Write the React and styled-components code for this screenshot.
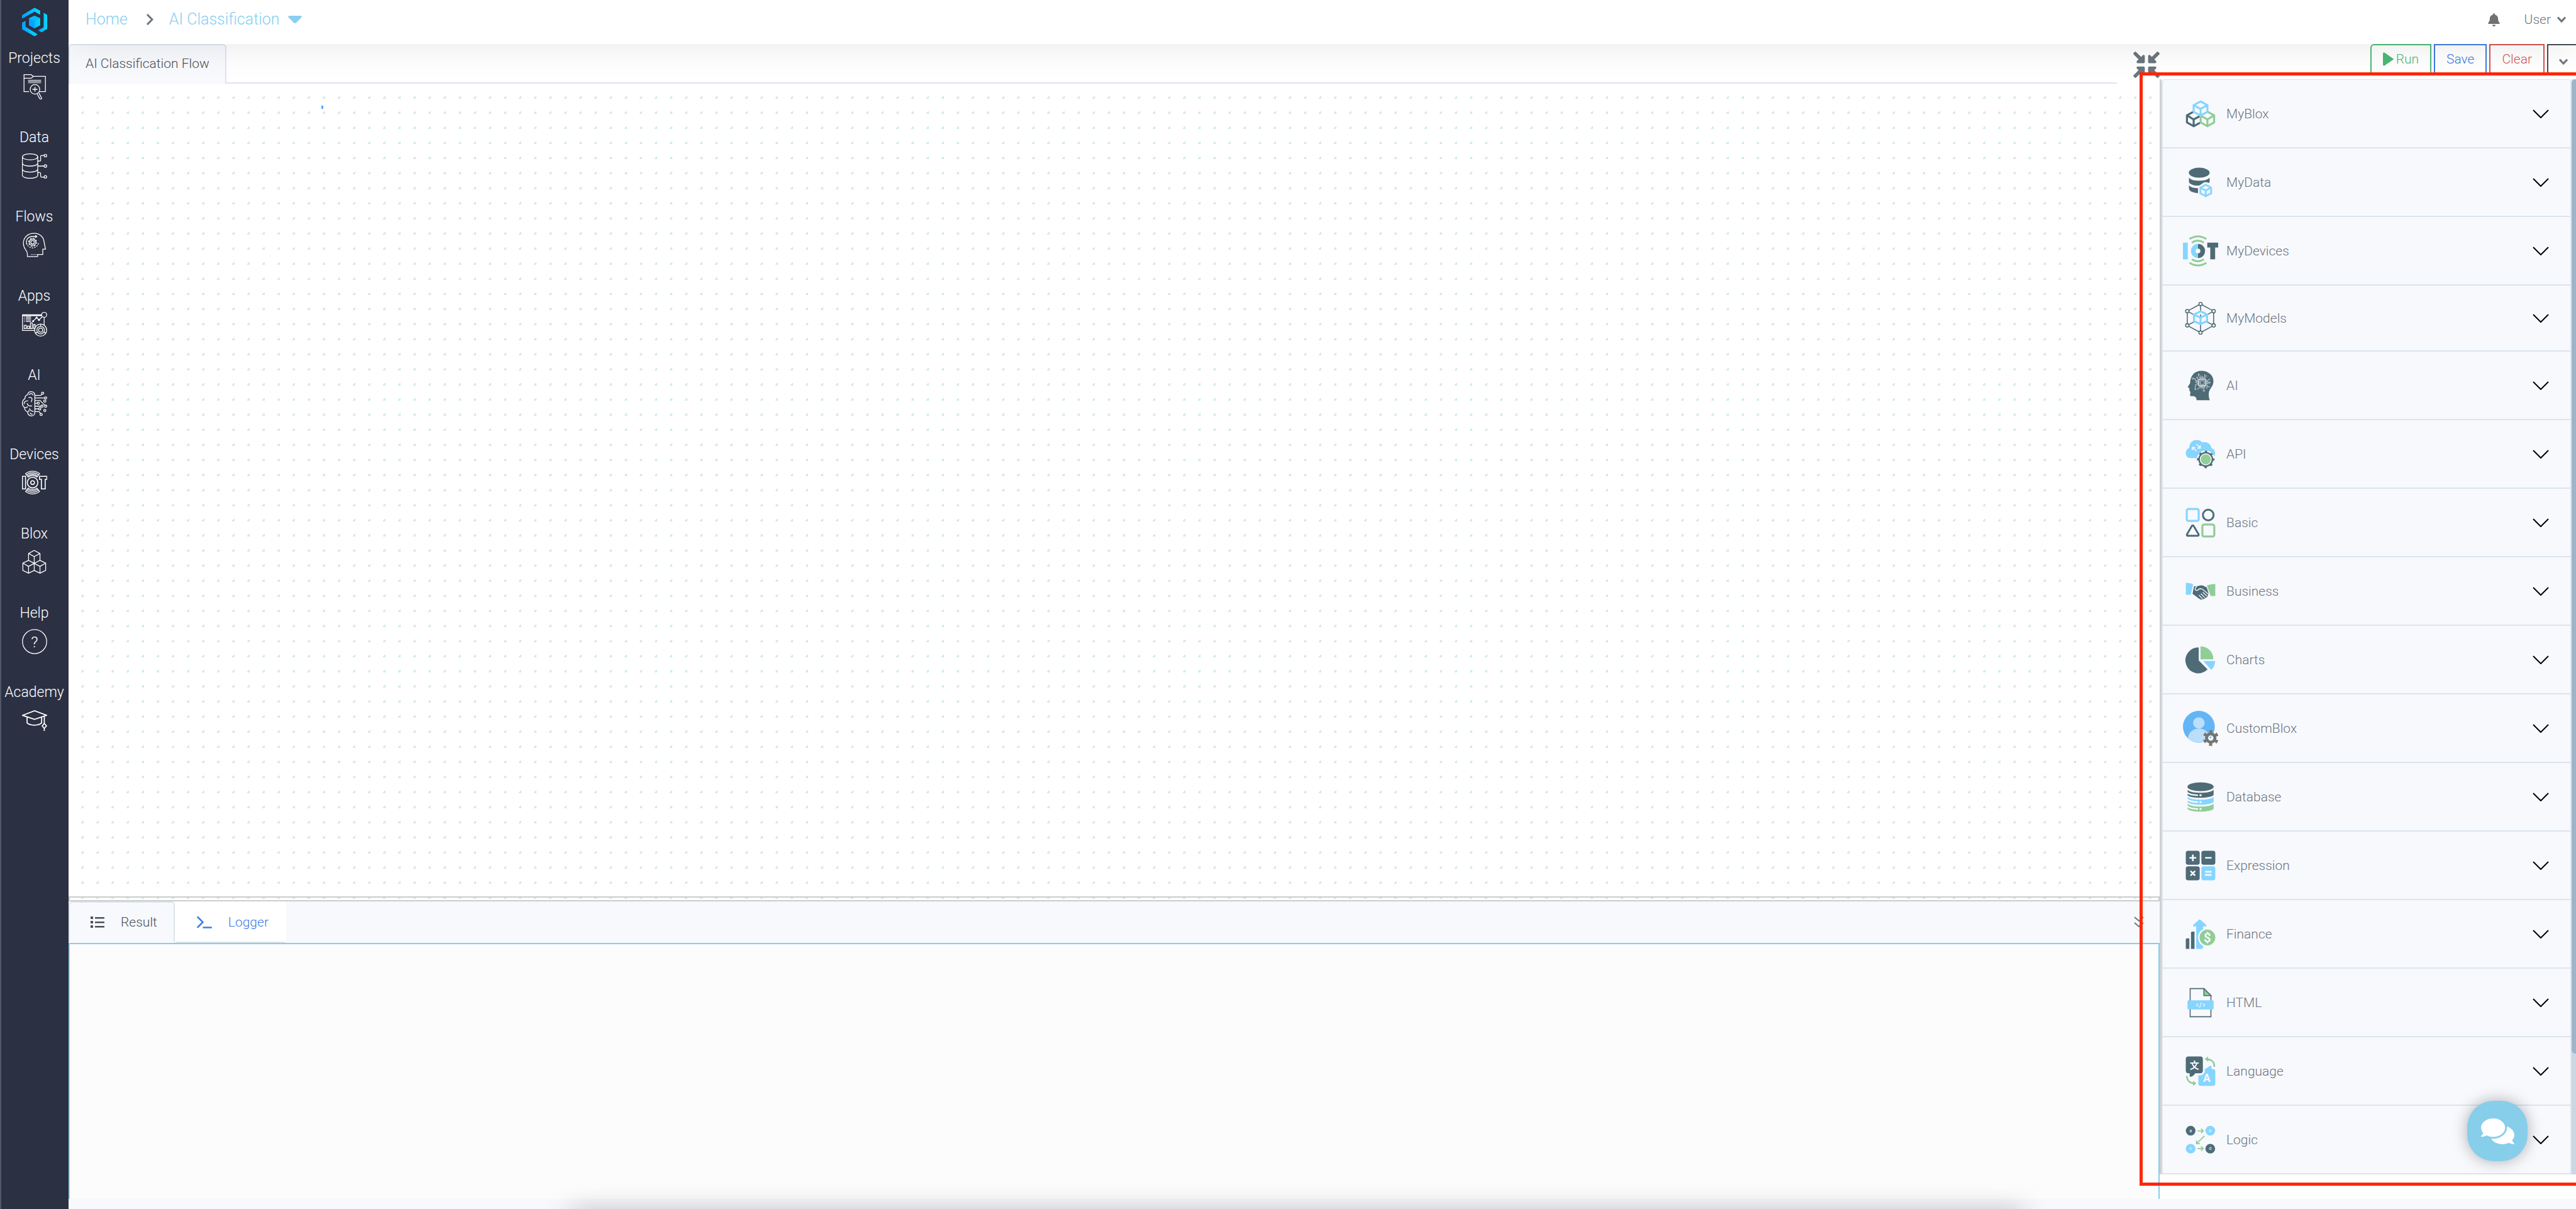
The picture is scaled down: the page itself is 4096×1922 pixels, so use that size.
import React, { useState } from 'react'
import styled, { createGlobalStyle, css } from 'styled-components'
import { FaBell, FaComments, FaCompressArrowsAlt } from 'react-icons/fa'

const DARK = '#4e6b76'
const BLUE = '#86d5ff'
const GREEN = '#90cd97'
const PANEL = '#f8f9fd'
const LINE = '#dce5ed'

const GlobalStyle = createGlobalStyle`
    * {
        box-sizing: border-box;
    }
    body {
        margin: 0;
        font-family: Roboto, "Liberation Sans", sans-serif;
        font-size: 21px;
        font-weight: 350;
        line-height: 32px;
        background: #fff;
        overflow: hidden;
    }
    button {
        font: inherit;
        color: inherit;
        background: none;
        border: 0;
        padding: 0;
        margin: 0;
        cursor: pointer;
    }
    a {
        color: inherit;
        text-decoration: none;
    }
    svg {
        display: block;
    }
`

const Shell = styled.div`
    display: flex;
    height: 100vh;
    position: relative;
    overflow: hidden;
`

const Sidebar = styled.nav`
    flex: none;
    width: 109px;
    background: #2b3043;
    box-shadow: inset 2px 0 #505766;
    padding-top: 12px;
    color: #fff;
    position: relative;
    z-index: 3;
`

const Brand = styled.a`
    display: flex;
    justify-content: center;
    height: 65px;
`

const NavItem = styled.a`
    display: flex;
    flex-direction: column;
    align-items: center;
    gap: 9px;
    height: 126px;
    font-size: 23px;
    svg {
        width: 40px;
        height: 40px;
        fill: none;
        stroke: #fff;
        stroke-width: 1.6;
    }
`

const Page = styled.div`
    flex: 1;
    min-width: 0;
    display: flex;
    flex-direction: column;
`

const Header = styled.header`
    flex: none;
    height: 70px;
    background: #fff;
    box-shadow: 0 0 60px rgba(0, 0, 0, 0.1);
    position: relative;
    z-index: 2;
    display: flex;
    justify-content: space-between;
    padding: 15px 16px 0 27px;
`

const Crumbs = styled.div`
    display: flex;
    align-items: center;
    height: 32px;
    font-size: 25px;
    color: #89cff0;
    & > svg {
        margin: 0 25px 0 29px;
    }
    button {
        display: flex;
        align-items: center;
        gap: 13px;
    }
`

const Account = styled.div`
    display: flex;
    align-items: center;
    height: 32px;
    color: #6c757d;
    gap: 38px;
    button {
        display: flex;
        align-items: center;
        gap: 10px;
    }
`

const Workspace = styled.div`
    flex: 1;
    min-height: 0;
    display: flex;
`

const Editor = styled.main`
    flex: 1;
    min-width: 0;
    display: flex;
    flex-direction: column;
`

const TabBar = styled.div`
    flex: none;
    display: flex;
    height: 63px;
`

const FlowTab = styled.button`
    height: 63px;
    padding: 0 25px 4px;
    color: #495057;
    background: ${PANEL};
    border: 2px solid ${LINE};
    border-bottom: 0;
    border-radius: 6px 6px 0 0;
`

const TabLine = styled.div`
    flex: 1;
    border-bottom: 2px solid ${LINE};
`

const CollapseButton = styled.button`
    width: 68px;
    display: flex;
    justify-content: flex-end;
    padding-top: 12px;
    color: #6c757d;
    svg {
        width: 42px;
        height: 42px;
    }
`

const Canvas = styled.div`
    flex: 1;
    position: relative;
    background-image: radial-gradient(circle at bottom right, #d3e9f2 4px, transparent 4px);
    background-size: 24px 24px;
    display: flex;
    align-items: flex-end;
`

const Mark = styled.i`
    position: absolute;
    left: 402px;
    top: 35px;
    width: 3px;
    height: 5px;
    background: #4da6ff;
`

const Splitter = styled.div`
    width: 100%;
    height: 8px;
    border: 2px solid #ccc;
    cursor: row-resize;
`

const Output = styled.section`
    flex: none;
    height: 473px;
    display: flex;
    flex-direction: column;
`

const OutputTabs = styled.div`
    display: flex;
    height: 66px;
    background: ${PANEL};
`

const OutputTab = styled.button`
    display: flex;
    align-items: center;
    gap: 26px;
    padding: 0 26px 0 33px;
    color: #3d7be8;
    background: #fff;
    border: 2px solid transparent;
    border-bottom-color: ${LINE};
    svg {
        flex: none;
    }
    ${props => props.$active && css`
        color: #495057;
        background: ${PANEL};
        border-color: ${LINE};
        border-bottom-color: transparent;
        border-radius: 6px 6px 0 0;
    `}
`

const HideOutput = styled.button`
    margin-left: auto;
    padding-right: 25px;
    color: #6c757d;
`

const Console = styled.div`
    flex: 1;
    background: #fcfcfc;
    border: 2px solid #87ceeb;
    border-bottom: 0;
`

const Library = styled.aside`
    flex: none;
    width: 662px;
    display: flex;
    flex-direction: column;
`

const Actions = styled.div`
    flex: none;
    height: 56px;
    display: flex;
    justify-content: flex-end;
    align-items: flex-start;
    gap: 4px;
    overflow: hidden;
`

const ActionButton = styled.button`
    display: flex;
    align-items: center;
    gap: 4px;
    height: 49px;
    padding: 0 18px 3px;
    color: ${props => props.$color};
    border: 2px solid ${props => props.$color};
    border-bottom: 0;
    border-top-left-radius: ${props => (props.$first ? 6 : 0)}px;
`

const MoreButton = styled(ActionButton)`
    width: 46px;
    color: #6c757d;
    border-color: ${props => props.$color};
    border-right: 0;
    padding: 4px 12px 0 17px;
`

const Scroller = styled.div`
    display: flex;
    border-left: 3px solid #d0d0d0;
`

const List = styled.ul`
    flex: 1;
    list-style: none;
    margin: 0;
    padding: 0;
    background: ${PANEL};
    border: 2px solid ${LINE};
    border-top-width: 1px;
    border-bottom: 0;
    border-radius: 5px 5px 0 0;
`

const Row = styled.button`
    width: 100%;
    display: flex;
    align-items: center;
    gap: 13px;
    padding: 26px 34px 25px 32px;
    border-bottom: 2px solid ${LINE};
    color: #6c757d;
    text-align: left;
    & > span {
        flex: 1;
    }
`

const BloxIcon = styled.svg`
    flex: none;
    width: 56px;
    font-family: Roboto, "Noto Sans CJK SC", sans-serif;
`

const Track = styled.div`
    width: 7px;
    background: #ccd7e2;
`

const Thumb = styled.div`
    height: 89%;
    background: #9fb4cb;
    border-radius: 6px 0 0 6px;
`

const Footer = styled.footer`
    flex: none;
    height: 16px;
    background: ${PANEL};
    position: relative;
    &::after {
        content: '';
        position: absolute;
        top: 24px;
        left: 20%;
        right: 22%;
        height: 20px;
        box-shadow: 0 0 44px rgba(0, 0, 0, 0.4);
    }
`

const Highlight = styled.div`
    position: absolute;
    z-index: 4;
    top: 115px;
    right: -10px;
    bottom: 37px;
    width: 704px;
    border: 5px solid #ff2600;
    pointer-events: none;
`

const ChatButton = styled.button`
    position: absolute;
    z-index: 3;
    right: 77px;
    bottom: 76px;
    width: 96px;
    height: 96px;
    display: flex;
    align-items: center;
    justify-content: center;
    color: #fff;
    background: #87ceeb;
    border-radius: 42px;
    box-shadow: 0 0 25px rgba(0, 0, 0, 0.3);
    svg {
        width: 53px;
        height: 47px;
    }
`

const Logo = () => (
    <svg width="40" height="46" viewBox="0 0 50 57">
        <defs>
            <linearGradient id="brand" x1="0" x2="1">
                <stop offset="0" stopColor="#0a9dff" />
                <stop offset="1" stopColor="#00dcff" />
            </linearGradient>
        </defs>
        <g fill="url(#brand)">
            <path d="M0 15L25 0l11 6v8L25 8 0 22z" />
            <path d="M43 10l7 4v28l-11 7-7-4 11-6z" />
            <path d="M0 30l7-4v12l24 15-6 4L0 43z" />
            <path d="M25 16l11 5v14l-11 6-11-6V21z" />
        </g>
        <path d="M14 21l11 6v14l-11-6z" fill="#0aa2ff" />
        <path d="M25 16l11 5-11 6-11-6z" fill="#08b8ff" />
    </svg>
)

const SmallChevron = () => (
    <svg width="14" height="10" viewBox="0 0 14 10" fill="none" stroke="currentColor" strokeWidth="3">
        <path d="M1 1.5l6 6.5 6-6.5" />
    </svg>
)

const RowChevron = () => (
    <svg width="26" height="14" viewBox="0 0 26 14" fill="none" stroke="#000" strokeWidth="2">
        <path d="M1 1l12 12L25 1" />
    </svg>
)

const navItems = [
    {
        label: 'Projects',
        icon: <>
            <path d="M14 34.5H4V.7h14l4.5 3.6L18 8H4M22.5 4.3h24v30.2H34" />
            <path d="M12 12h26M12 14.2h26M12 17h26" strokeWidth="1.2" />
            <circle cx="25.7" cy="30" r="9.5" />
            <path d="M25.7 25v10M20.7 30h10M30 39l5 9c2 3 5 1 3.500-1.500L33.500 37" />
        </>
    },
    {
        label: 'Data',
        icon: <>
            <ellipse cx="16" cy="6.700" rx="15.300" ry="6" />
            <path d="M.7 6.700V43c0 8.500 30.600 8.500 30.600 0V6.700M.7 19c0 8 30.600 8 30.600 0M.7 31c0 8 30.600 8 30.600 0" />
            <path d="M31 15h4q2 0 2-2V6q0-2 2-2h5M31 25h13M31 38h4q2 0 2 2v5q0 2 2 2h5" />
            <circle cx="46.500" cy="4.300" r="2.500" />
            <circle cx="46.500" cy="25" r="2.500" />
            <circle cx="46.500" cy="46.500" r="2.500" />
        </>
    },
    {
        label: 'Flows',
        icon: <>
            <path d="M10.700 47.400V42C10.700 34 2.700 33 2.700 21 2.700 9 12 1 23.700 1 36 1 43 9 44 19l2.700 13.700h-5.400v10.500H31v4.200z" />
            <circle cx="21" cy="19" r="3.500" />
            <circle cx="21" cy="19" r="6.500" />
            <circle cx="21" cy="19" r="8" strokeDasharray="3.140" />
            <path d="M10 24C6 14 12 7.500 21 7.500h8M26.500 5l3 2.500-3 2.500" />
            <path d="M11 25c5 7 17 8 22-4" strokeDasharray="3 2" />
            <path d="M18 43.200h13" strokeDasharray="1.500 1.500" />
        </>
    },
    {
        label: 'Apps',
        icon: <>
            <path d="M39 5.600H1v31h24M44 10v17M1 7.200h38" />
            <circle cx="44" cy="5.500" r="5" />
            <path d="M7.500 9.800H18M7.500 12.600H18M7.500 15.800H18M7.500 19H18M4 9.800h1.500M4 12.600h1.500M4 15.800h1.500M4 19h1.500" />
            <path d="M22 18.200l7-7 4.700 4.600L40.500 9M4.300 26.300h4V33h-4zM10.700 28h4v5h-4zM16.700 21.700h3.600V33h-3.600zM23 25h3v8h-3z" />
            <circle cx="22" cy="18.200" r="1.200" />
            <circle cx="29" cy="11.200" r="1.200" />
            <circle cx="33.700" cy="15.800" r="1.200" />
            <circle cx="37" cy="36" r="12" fill="#2b3043" />
            <circle cx="37" cy="36" r="7.500" />
            <circle cx="37" cy="36" r="4" />
            <path d="M37 24v4.500M27 42l4-2.500M47 42l-4-2.500" />
        </>
    },
    {
        label: 'AI',
        icon: <>
            <path d="M25.500 8C25.500 3 22 .8 18.500.8c-4 0-7 2.600-7.400 6.200C7.500 8 5.600 11 6 14.500 2.500 16.500.8 20 .8 24s1.800 6.800 4.500 8.600c-.4 4 1.800 6.800 5.600 8.100.6 5 3.800 8.300 8 8.300 4 0 6.600-3 6.600-7z" />
            <path d="M14 7c3-4 7-3 8 1M13 13c6-3 9 2 5 8M4 26c0-5 3-7 8-7M10 24c2 5 6 6 10 5M5.500 32c3 1 5 0 5.500-2M15 34c1 4 4 6 8 6M12 41c2-1 2-3 1.500-4M16 43c1 2 3 3 5 2.500" />
            <path d="M25 8.300h12l3-3M25 13.200h20M25 18.500h11l9.500 9.500M25 23.800h5M25 29.700h12.500M25 35h8M25 40.600h9l3 4" />
            {[[41, 3.8], [47, 13.2], [45.3, 19.6], [32.3, 23.8], [39.7, 29.7], [47, 29.7], [35.3, 35], [45.3, 38.2], [38, 46.2]].map(([x, y]) => (
                <circle key={`${x}-${y}`} cx={x} cy={y} r="2.200" />
            ))}
        </>
    },
    {
        label: 'Devices',
        icon: <>
            <path d="M.8 11.500H7v25H.8zM34.700 11.500h14.800v6h-3.400v19h-7.600v-19h-3.800z" strokeWidth="2" />
            <circle cx="21" cy="24" r="10.500" strokeWidth="2" />
            <circle cx="21" cy="24" r="3.700" strokeWidth="2" />
            <path d="M7 6.300a22.500 22.500 0 0 1 28 0L29.600 13a14 14 0 0 0-17.200 0zM9 8.800a19.500 19.500 0 0 1 24 0M11 11.200a16.500 16.500 0 0 1 20 0" />
            <path d="M7 41.700a22.500 22.500 0 0 0 28 0L29.600 35a14 14 0 0 1-17.200 0zM9 39.200a19.500 19.500 0 0 0 24 0M11 36.800a16.500 16.500 0 0 0 20 0" />
        </>
    },
    {
        label: 'Blox',
        icon: <>
            <path d="M24.300 27L13 21V7.300l11.300-6 11.400 6V21zM13 7.300l11.300 6.100 11.400-6.100M24.300 13.400V27" />
            <path d="M13 21L1.700 26.500V41L13 46.500 24.300 41V27M1.700 26.500L13 33l11.300-6M13 33v13.500" />
            <path d="M35.700 21L47 26.500V41l-11.300 5.500L24.300 41M47 26.500L35.700 33l-11.400-6M35.700 33v13.500" />
        </>
    },
    {
        label: 'Help',
        icon: <>
            <circle cx="25" cy="25" r="24" />
            <text x="25" y="36" fontSize="31" textAnchor="middle" fill="#fff" stroke="none">?</text>
        </>
    },
    {
        label: 'Academy',
        icon: <g strokeWidth="2.200">
            <path d="M.8 14L25 5l24 9-24 8zM10 17.500V29c6 6 23 6 29 0V17.500M44.300 15.500V30M44.300 40v5" />
            <path d="M44.300 30l4.200 5-4.200 5-4.200-5z" />
        </g>
    }
]

const dbBand = (y, color) => (
    <g key={y}>
        <path d={`M103 ${y}c8 12 42 17 77 17s70-6 78-18v31c-8 11-43 17-78 17s-68-5-77-15z`} fill={color} />
        <path d={`M101 ${y + 16}c14 12 40 15 64 16`} fill="none" stroke={PANEL} strokeWidth="9" />
        <path d={`M174 ${y + 26}h12v11h-12z`} fill={PANEL} />
    </g>
)

const bloxGroups = [
    {
        label: 'MyBlox',
        viewBox: '75 96 210 210',
        icon: <g fill="none" strokeWidth="12">
            <path d="M136 189l-37 21v42l40 23 38-21M99 210l40 24 36-19M139 234v41" stroke={DARK} />
            <path d="M224 189l37 21v42l-40 23-40-23v-37M261 210l-40 24-38-21M221 234v41" stroke={GREEN} />
            <path d="M180 127l41 22v40l-41 22-41-22v-40zM139 149l41 23 41-23M180 172v39" stroke={BLUE} />
        </g>
    },
    {
        label: 'MyData',
        viewBox: '75 504 210 210',
        icon: <>
            <ellipse cx="172" cy="551" rx="62" ry="30" fill={DARK} />
            <path d="M111 580c8 14 34 19 61 19s53-5 62-19v28q-4 6-10 2-13-6-26 0-10 8-22 16-8 2-14 2c-26 0-44-8-51-20z" fill={DARK} />
            <path d="M111 626c8 12 28 16 54 18v29c-30-1-54-12-54-28z" fill={DARK} />
            <path d="M211 623l32 17v34l-32 17-32-17v-34zM179 640l32 17 32-17M211 657v34" fill="none" stroke={BLUE} strokeWidth="11" />
        </>
    },
    {
        label: 'MyDevices',
        viewBox: '75 912 210 210',
        icon: <>
            <path d="M75 967h29v100H75z" fill={BLUE} />
            <path d="M220 967h65v29h-18v71h-29v-71h-18z" fill={DARK} />
            <g fill="none" strokeWidth="28">
                <path d="M165 989a28 28 0 0 0 0 56" stroke={BLUE} />
                <path d="M165 989a28 28 0 0 1 0 56" stroke={DARK} />
            </g>
            <path d="M114 946q50-32 101 0M128 967q36-23 72 0M114 1087q50 32 101 0M128 1067q36 23 72 0" fill="none" stroke={GREEN} strokeWidth="11" />
        </>
    },
    {
        label: 'MyModels',
        viewBox: '75 1320 210 195',
        icon: <>
            <g fill="none" stroke={DARK} strokeWidth="6">
                <path d="M180 1332l78 43v85l-78 43-79-43v-85zM180 1332v171M101 1375l157 85M258 1375l-157 85" />
                {[[180, 1332], [258, 1375], [258, 1460], [180, 1503], [101, 1460], [101, 1375]].map(([x, y]) => (
                    <circle key={`${x}-${y}`} cx={x} cy={y} r="10" fill={PANEL} />
                ))}
            </g>
            <path d="M180 1376l39 19v39l-39 18-39-18v-39zM141 1395l39 19 39-19M180 1414v38" fill={PANEL} stroke={BLUE} strokeWidth="12" />
        </>
    },
    {
        label: 'AI',
        viewBox: '75 94 210 210',
        icon: <>
            <path d="M156 286v-6c-2-12-10-18-22-18h-16v-18l3-4-4-4v-6l-5-4 2-12-11-6 15-24c0-44 27-73 67-73 43 0 72 29 72 61 0 36-25 43-28 73-1 15 1 27 6 41z" fill={DARK} />
            <g fill="none" stroke="#e6ecf2" strokeWidth="3">
                <path d="M170 162h40v38h-40z" strokeWidth="5" />
                <path d="M179 170h23v22h-23z" />
                <path d="M176 160v-10l-7-6v-8M182 160v-22M188 160v-14M194 160v-18M200 160v-10l5-6v-14M206 160v-8l8-6v-10M176 202v10l-12 4v8M182 202v12M188 202v18M194 202v10l6 6v8M200 202v14M206 202v10" />
                <path d="M168 168h-20v-10l-10-2M168 174h-16M168 180h-20M168 186h-12M168 194h-19v22M168 164l-7-8M212 168h12l4-6h10M212 174h14M212 180h18M212 186h14l4 4M212 194h8v12h16M217 206v12" />
                <circle cx="169" cy="133" r="4" />
                <circle cx="134" cy="157" r="4" />
                <circle cx="160" cy="152" r="4" />
                <circle cx="149" cy="220" r="4" />
                <circle cx="200" cy="230" r="4" />
                <circle cx="234" cy="181" r="4" />
            </g>
        </>
    },
    {
        label: 'API',
        viewBox: '75 501 210 210',
        icon: <>
            <path d="M122 629c-20 0-30-13-30-29s9-28 20-31c2-29 20-47 44-47 14 0 25 4 34 14 26-8 53 9 55 34 18 5 25 24 21 42l-6 8h-60l-38 9z" fill={BLUE} />
            <circle cx="211" cy="637" r="53" fill={PANEL} />
            <path d="M155 587l-23-21M131 582v-16h17M155 546l22 21M161 570h17v-17" fill="none" stroke={PANEL} strokeWidth="6" />
            <circle cx="211" cy="637" r="30" fill={GREEN} />
            <g fill="none" stroke={DARK}>
                <circle cx="211" cy="637" r="40" strokeWidth="9" />
                <circle cx="211" cy="637" r="47" strokeWidth="10" strokeDasharray="14 22.910" strokeDashoffset="7" />
            </g>
        </>
    },
    {
        label: 'Basic',
        viewBox: '75 909 210 210',
        icon: <g fill="none" strokeLinejoin="round">
            <rect x="98" y="932" width="71" height="71" rx="10" stroke={BLUE} strokeWidth="12" />
            <circle cx="226" cy="968" r="32" stroke={DARK} strokeWidth="11" />
            <path d="M129 1032q5-5 9 0l30 50q3 9-5 10h-60q-7-2-4-9z" stroke={DARK} strokeWidth="11" />
            <rect x="191" y="1025" width="71" height="71" rx="10" stroke={GREEN} strokeWidth="12" />
        </g>
    },
    {
        label: 'Business',
        viewBox: '75 1317 210 210',
        icon: <>
            <path d="M92 1371q23 0 44 8l-14 64H92z" fill={BLUE} />
            <path d="M218 1386q22-7 50-8v72h-28z" fill={GREEN} />
            <path d="M141 1392h17l14-4c12-4 24-2 34 6l11 5 12 39c-3 8-7 10-7 14-4 8-12 8-16 12-8 6-14 4-18 8-10 2-20-10-56-35z" fill={DARK} />
            <g fill="none" stroke={PANEL} strokeWidth="5">
                <path d="M158 1390l-11 17c0 11 12 13 20 5l10-6 14 3 39 33" />
                <path d="M194 1428l24 22M182 1436l24 24M170 1444l22 24" />
            </g>
        </>
    },
    {
        label: 'Charts',
        viewBox: '75 45 210 210',
        icon: <g strokeWidth="4" strokeLinejoin="round">
            <path d="M167 78a75 75 0 1 0 52 129l-52-53z" fill={DARK} stroke={DARK} />
            <path d="M182 71a74 74 0 0 1 72 74h-72z" fill={GREEN} stroke={GREEN} />
            <path d="M200 159h65q-2 30-21 48z" fill={BLUE} stroke={BLUE} />
        </g>
    },
    {
        label: 'CustomBlox',
        viewBox: '75 453 210 210',
        icon: <>
            <circle cx="170" cy="548" r="95" fill="#64b5f6" />
            <circle cx="170" cy="525" r="34" fill="#bbdefb" />
            <path d="M105 617c3-35 30-58 65-58s62 23 65 58a95 95 0 0 1-130 0z" fill="#bbdefb" />
            <circle cx="241" cy="615" r="17" fill={PANEL} />
            <path d="M232 611l14-10-6 18z" fill="#64b5f6" />
            <g fill="none" stroke="#757575">
                <circle cx="241" cy="615" r="25" strokeWidth="18" />
                <circle cx="241" cy="615" r="38" strokeWidth="18" strokeDasharray="18 21.790" strokeDashoffset="9" transform="rotate(-90 241 615)" />
            </g>
        </>
    },
    {
        label: 'Database',
        viewBox: '75 861 210 210',
        icon: <>
            <ellipse cx="180" cy="905" rx="78" ry="26" fill={DARK} />
            {dbBand(924, DARK)}
            {dbBand(965, BLUE)}
            {dbBand(1006, GREEN)}
        </>
    },
    {
        label: 'Expression',
        viewBox: '75 1269 210 210',
        icon: <>
            <rect x="92" y="1286" width="83" height="83" rx="14" fill={DARK} />
            <rect x="185" y="1286" width="83" height="83" rx="14" fill={DARK} />
            <rect x="92" y="1379" width="83" height="83" rx="14" fill={DARK} />
            <rect x="185" y="1379" width="83" height="83" rx="14" fill={BLUE} />
            <path d="M118 1328h32M134 1312v32M211 1328h31M123 1409l22 22M145 1409l-22 22M211 1411h31M211 1430h31" stroke={PANEL} strokeWidth="10" strokeLinecap="round" />
        </>
    },
    {
        label: 'Finance',
        viewBox: '75 87 210 210',
        icon: <>
            <path d="M113 217v63H96q-4 0-4-4v-53q0-6 6-6zM144 177v103h-21v-97q0-6 6-6z" fill={DARK} />
            <path d="M154 280V146h-16q-7-2-2-8l34-31q5-4 10 0l34 31q5 6-2 8h-16v122q-2 12-10 12z" fill={BLUE} />
            <circle cx="221" cy="212" r="56" fill={PANEL} />
            <circle cx="221" cy="212" r="47" fill={GREEN} />
            <text x="221" y="240" fontSize="76" fontWeight="700" textAnchor="middle" fill={PANEL}>$</text>
        </>
    },
    {
        label: 'HTML',
        viewBox: '75 495 210 210',
        icon: <>
            <path d="M118 516h82l42 42v126H118z" fill="none" stroke={DARK} strokeWidth="6" />
            <path d="M200 516v42h42z" fill={GREEN} stroke={DARK} strokeWidth="6" />
            <rect x="102" y="586" width="156" height="54" rx="6" fill={BLUE} />
            <path d="M168 604l-13 10 13 10M185 598l-11 33M193 604l13 10-13 10" fill="none" stroke={PANEL} strokeWidth="4" />
        </>
    },
    {
        label: 'Language',
        viewBox: '75 903 210 210',
        icon: <>
            <path d="M108 920h70q16 0 16 16v68q0 16-16 16h-30q-8 16-26 21-7 1-7-7v-14h-7q-16 0-16-16v-68q0-16 16-16z" fill={DARK} />
            <path d="M182 1032q18-4 23-20v-16q10-4 19-12 10-8 16-9 6-1 6 5v15h8q14 0 14 14v71q0 15-14 15h-73q-14 0-14-14v-49z" fill={BLUE} />
            <text x="143" y="992" fontSize="56" fontWeight="700" textAnchor="middle" fill={PANEL}>文</text>
            <text x="217" y="1070" fontSize="66" fontWeight="700" textAnchor="middle" fill={PANEL}>A</text>
            <path d="M262 978c0-23-14-40-40-41M98 1039c2 23 17 39 40 41" fill="none" stroke={GREEN} strokeWidth="10" strokeLinecap="round" />
            <path d="M205 935l20-15v31zM155 1080l-19-15v31z" fill={GREEN} />
        </>
    },
    {
        label: 'Logic',
        viewBox: '75 1311 210 210',
        icon: <>
            <circle cx="121" cy="1362" r="29" fill={DARK} />
            <circle cx="238" cy="1362" r="29" fill={BLUE} />
            <circle cx="121" cy="1469" r="29" fill={BLUE} />
            <circle cx="238" cy="1469" r="29" fill={DARK} />
            <g fontSize="28" fontWeight="400" textAnchor="middle" fill={PANEL}>
                <text x="121" y="1371">a</text>
                <text x="238" y="1371">b</text>
                <text x="121" y="1477">c</text>
                <text x="238" y="1477">d</text>
            </g>
            <path d="M162 1363h33M183 1350l13 13-13 13M162 1468h33M183 1455l13 13-13 13M204 1392l-47 46M156 1419v20h20" fill="none" stroke={GREEN} strokeWidth="7" />
        </>
    }
]

const App = () => {
    const [open, setOpen] = useState(null)

    const toggle = (label) => {
        setOpen(open === label ? null : label)
    }

    return (
        <>
            <GlobalStyle />
            <Shell>
                <Sidebar>
                    <Brand href="#" aria-label="Dashboard"><Logo /></Brand>
                    {navItems.map(item => (
                        <NavItem key={item.label} href="#">
                            {item.label}
                            <svg viewBox="0 0 50 50">{item.icon}</svg>
                        </NavItem>
                    ))}
                </Sidebar>
                <Page>
                    <Header>
                        <Crumbs>
                            <a href="#">Home</a>
                            <svg width="12" height="18" viewBox="0 0 12 18" fill="none" stroke="#6c757d" strokeWidth="3">
                                <path d="M2 1l8 8-8 8" />
                            </svg>
                            <button>
                                AI Classification
                                <svg width="22" height="12" viewBox="0 0 22 12" fill="#89cff0">
                                    <path d="M2 0h18q3 1 1 3l-8 8q-2 2-4 0L1 3Q-1 1 2 0z" />
                                </svg>
                            </button>
                        </Crumbs>
                        <Account>
                            <FaBell size={21} color="#717171" />
                            <button>User <SmallChevron /></button>
                        </Account>
                    </Header>
                    <Workspace>
                        <Editor>
                            <TabBar>
                                <FlowTab>AI Classification Flow</FlowTab>
                                <TabLine />
                                <CollapseButton aria-label="Collapse"><FaCompressArrowsAlt /></CollapseButton>
                            </TabBar>
                            <Canvas>
                                <Mark />
                                <Splitter />
                            </Canvas>
                            <Output>
                                <OutputTabs>
                                    <OutputTab $active>
                                        <svg width="22" height="18" viewBox="0 0 22 18" fill="currentColor">
                                            <path d="M0 0h4v4H0zM0 7h4v4H0zM0 14h4v4H0zM7 1h15v2.500H7zM7 8h15v2.500H7zM7 15h15v2.500H7z" />
                                        </svg>
                                        Result
                                    </OutputTab>
                                    <OutputTab>
                                        <svg width="24" height="20" viewBox="0 0 24 20" fill="none" stroke="currentColor" strokeWidth="2.500" strokeLinecap="round">
                                            <path d="M1.500 2l8 8-8 8M10.500 18.500H23" />
                                        </svg>
                                        Logger
                                    </OutputTab>
                                    <HideOutput aria-label="Hide output">
                                        <svg width="16" height="18" viewBox="0 0 16 18" fill="none" stroke="currentColor" strokeWidth="2">
                                            <path d="M1 1l7 6 7-6M1 10l7 6 7-6" />
                                        </svg>
                                    </HideOutput>
                                </OutputTabs>
                                <Console role="log" />
                            </Output>
                        </Editor>
                        <Library>
                            <Actions>
                                <ActionButton $color="#4bb974" $first>
                                    <svg width="17" height="22" viewBox="0 0 17 22" fill="currentColor">
                                        <path d="M0 2q1-3 3-1l13 9q2 1 0 2L3 21q-2 2-3-1z" />
                                    </svg>
                                    Run
                                </ActionButton>
                                <ActionButton $color="#3d7be3">Save</ActionButton>
                                <ActionButton $color="#d9534f">Clear</ActionButton>
                                <MoreButton $color="#454b54" aria-label="More"><SmallChevron /></MoreButton>
                            </Actions>
                            <Scroller>
                                <List>
                                    {bloxGroups.map(group => (
                                        <li key={group.label}>
                                            <Row aria-expanded={open === group.label} onClick={() => toggle(group.label)}>
                                                <BloxIcon viewBox={group.viewBox}>{group.icon}</BloxIcon>
                                                <span>{group.label}</span>
                                                <RowChevron />
                                            </Row>
                                        </li>
                                    ))}
                                </List>
                                <Track><Thumb /></Track>
                            </Scroller>
                        </Library>
                    </Workspace>
                    <Footer />
                </Page>
                <ChatButton aria-label="Chat"><FaComments /></ChatButton>
                <Highlight />
            </Shell>
        </>
    )
}

export default App
